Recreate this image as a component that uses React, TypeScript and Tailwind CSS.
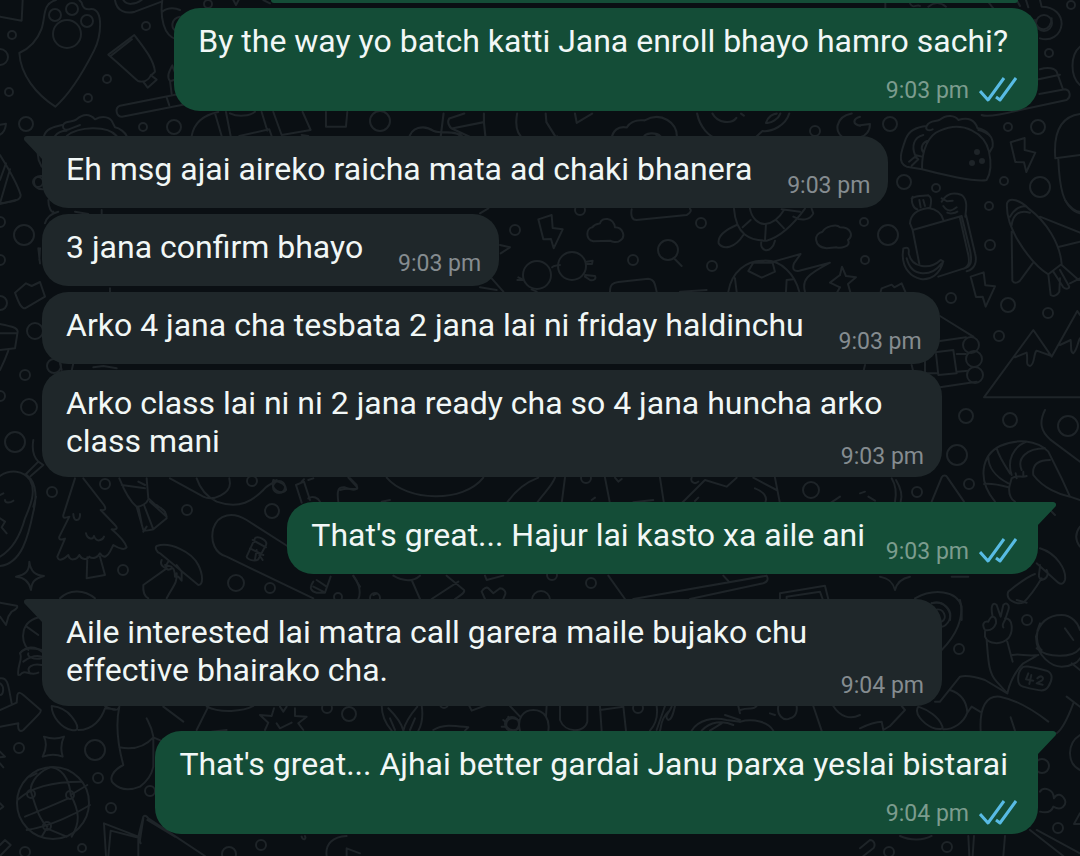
import React from 'react';

interface Message {
  id: number;
  text: string;
  time: string;
  mine?: boolean;
  tail?: boolean;
  // where the time sits relative to the text
  meta: 'inline' | 'corner' | 'below';
}

const messages: Message[] = [
  { id: 1, text: 'By the way yo batch katti Jana enroll bhayo hamro sachi?', time: '9:03 pm', mine: true, meta: 'below' },
  { id: 2, text: 'Eh msg ajai aireko raicha mata ad chaki bhanera', time: '9:03 pm', tail: true, meta: 'inline' },
  { id: 3, text: '3 jana confirm bhayo', time: '9:03 pm', meta: 'inline' },
  { id: 4, text: 'Arko 4 jana cha tesbata 2 jana lai ni friday haldinchu', time: '9:03 pm', meta: 'inline' },
  { id: 5, text: 'Arko class lai ni ni 2 jana ready cha so 4 jana huncha arko class mani', time: '9:03 pm', meta: 'corner' },
  { id: 6, text: "That's great... Hajur lai kasto xa aile ani", time: '9:03 pm', mine: true, tail: true, meta: 'inline' },
  { id: 7, text: 'Aile interested lai matra call garera maile bujako chu effective bhairako cha.', time: '9:04 pm', tail: true, meta: 'corner' },
  { id: 8, text: "That's great... Ajhai better gardai Janu parxa yeslai bistarai", time: '9:04 pm', mine: true, tail: true, meta: 'below' },
];

// cx, cy, r
const bubbles = [
  [12, 35, 4], [0, 57, 8], [9, 92, 4], [26, 124, 7], [107, 79, 4], [88, 98, 4], [146, 26, 4], [143, 127, 4],
  [174, 127, 7], [72, 9, 6], [55, 15, 6], [87, 21, 6], [67, 34, 14], [208, 4, 4], [38, 182, 5],
  [1071, 5, 4], [1044, 23, 8], [1049, 53, 4], [890, 124, 7], [1008, 127, 4], [1038, 127, 7], [904, 182, 7],
  [936, 188, 4], [1004, 181, 4], [1040, 187, 10], [989, 206, 4],
  [515, 230, 5], [701, 223, 5], [633, 260, 5], [712, 266, 5], [580, 210, 5], [668, 250, 10], [537, 275, 14], [572, 266, 14],
  [864, 222, 4], [888, 235, 10], [865, 260, 4], [990, 245, 5], [951, 298, 5], [1008, 305, 7], [1048, 313, 5],
  [999, 336, 5], [971, 345, 8], [974, 359, 8], [975, 375, 8], [966, 416, 7], [1010, 420, 7], [1068, 426, 10],
  [957, 455, 10], [917, 492, 5], [969, 484, 5], [1027, 620, 5], [959, 649, 5], [1042, 766, 7], [1058, 828, 5],
  [947, 847, 5], [889, 852, 5], [24, 235, 10], [0, 222, 5], [0, 260, 5], [0, 303, 7], [35, 331, 8], [25, 375, 5],
  [0, 396, 5], [29, 407, 8], [54, 366, 7], [15, 442, 10], [52, 492, 5], [105, 484, 5], [252, 481, 5], [187, 510, 5],
  [272, 511, 7], [279, 487, 6], [123, 570, 5], [236, 583, 8], [270, 588, 5], [19, 748, 5], [95, 750, 10],
  [98, 778, 5], [150, 791, 5], [111, 808, 5], [82, 848, 4], [25, 852, 5], [261, 845, 5], [229, 854, 7],
  [349, 714, 7], [327, 708, 5], [53, 803, 36], [31, 794, 4], [70, 795, 4], [47, 826, 4], [444, 704, 4],
  [638, 708, 5], [811, 490, 8], [591, 583, 5], [375, 598, 5], [552, 575, 5], [541, 600, 9], [380, 121, 10], [815, 131, 5],
  [586, 478, 5], [512, 724, 7], [338, 597, 4],
];

// Each doodle group is drawn at three times its size around its own origin
const doodles = [
  {
    at: 'translate(0 0) scale(0.3333)',
    paths: [
      'M0 50 65 62 68 0',
      'M168 0C125 12 138 50 124 88 112 120 88 145 58 159 62 225 108 282 166 320 206 285 250 215 282 152 304 108 312 25 273 27 258 30 248 25 245 8L238 0',
      'M403 105 325 164C362 195 398 230 414 243 430 248 445 242 452 227L465 215C462 180 430 140 403 105ZM396 118 332 168M452 225 470 239 443 263 429 244',
      'M548 280 360 317C342 325 350 350 366 350L560 312M500 292 508 316M515 282 510 243C498 228 510 210 517 196 520 212 532 220 526 238L530 278M512 243 530 238',
      'M132 408C138 385 165 380 190 374 195 360 220 368 230 358 250 340 270 342 285 358 310 345 332 352 338 368L345 382M190 374C185 390 200 392 212 386L240 375M345 382C360 384 375 398 380 408M200 408C235 380 320 375 350 408M165 408C172 398 185 392 200 392',
      'M0 374 18 371C16 392 8 400 0 404M0 465C25 505 55 560 62 585 62 598 50 605 0 610M0 610 30 508M0 540 18 490M110 440 116 480 125 500M125 528C92 525 95 570 130 568',
      'M345 0C350 35 380 42 405 35L485 5M370 0C380 16 405 15 425 0M487 0C480 50 490 108 530 118M487 35C505 20 530 25 540 30M540 50C515 55 508 85 532 95M700 0 708 15 716 0M790 0 810 10',
      'M575 408C582 370 610 345 655 336M645 340 665 408M678 336 692 408M690 340C715 352 750 348 765 335M785 336 802 392M718 408 808 388 815 408M820 336 845 405 932 390 908 336M905 405 925 408M978 336V380H1038L1042 336',
    ],
  },
  {
    at: 'translate(860 0) scale(0.3333)',
    paths: [
      'M365 345C380 352 420 345 480 330L620 300C635 290 630 270 615 268L538 282M536 238 600 224M540 208C565 200 585 205 590 215L608 265M498 0 505 22M540 0 545 20C585 20 605 45 605 72 602 108 570 125 540 115M575 55C575 95 530 100 525 60M660 140C630 165 630 230 660 255M76 0V25M150 10C160 30 170 10 180 18M205 20C220 8 240 5 258 20M380 0 400 25M470 0 480 18',
      'M186 508 140 500C110 490 125 450 138 415 150 385 180 380 200 378 208 360 225 365 238 360 260 342 285 346 295 360 325 350 345 360 352 384 380 390 402 410 398 440L388 458M186 508C185 450 205 405 240 392 310 360 375 400 387 455 395 490 392 520 380 540 350 548 230 520 186 508M200 378C195 390 205 394 218 388M165 465C155 440 160 412 190 405M188 455C180 440 190 425 205 422M165 465 186 470M147 485 165 470 175 478 155 497M392 410C385 400 365 392 355 390',
      'M452 427 494 414 494 450 526 458 499 516 492 487 466 486ZM0 376 30 372C30 395 15 408 4 410M660 342C600 350 580 400 586 475L660 465M595 478C598 550 605 625 660 640',
    ],
  },
  {
    at: 'translate(480 200) scale(0.3333)',
    paths: [
      'M175 58 215 45 218 84 248 88 221 145 213 117 190 118ZM340 124C315 118 318 85 337 82 345 70 355 72 360 70 365 50 400 52 405 82 430 82 438 112 420 122 410 130 395 125 390 122ZM216 202C222 195 230 198 240 195M320 185 338 182 336 192 320 192M315 225 345 228C350 238 340 242 330 240L315 230M112 240H130M115 232 128 238M155 268 170 275',
      'M585 178 605 198M455 28C452 45 455 60 470 60L620 45C632 40 635 30 630 26M762 26C768 105 810 122 860 122 905 110 950 60 975 26M810 26C815 55 835 72 855 72 880 70 900 50 912 30M858 72 855 122M812 60 788 82M890 62 912 85M770 75C740 88 712 105 716 130 730 150 765 145 790 105M845 122C835 155 875 165 885 122M905 28 960 35M940 50C965 65 990 60 1000 40L995 26',
      'M390 275C390 252 400 248 415 246L505 236C525 238 525 255 530 275M600 275 680 270M745 275C755 215 800 180 850 182 905 178 945 225 958 275M770 275 765 235M805 213 820 188H878L885 215 845 233ZM920 240 940 238M920 240 918 275M880 185 962 162 942 190C935 210 945 215 958 212L1050 188C980 225 965 240 975 275M1080 262 1050 248 1080 225M1040 145C1000 140 1000 100 1028 95 1035 80 1070 70 1080 82 1115 82 1120 108 1104 120 1115 140 1080 146 1070 142ZM60 135 90 142 62 160M0 40 25 25M35 235 70 275M0 262 50 270',
      'M1080 225 1086 200 1098 228 1128 232 1104 252 1112 280M1080 262 1070 280',
    ],
  },
  {
    at: 'translate(860 200) scale(0.3333)',
    paths: [
      'M150 70C152 40 175 28 205 24 232 28 245 40 250 60M158 90 305 48 330 150C338 190 332 200 310 206L235 230M158 90 150 70M158 90 178 192M300 55 325 165C330 190 325 200 312 206M318 45 345 160C352 185 345 208 320 214M158 -10C150 10 165 28 172 28M210 25C215 5 215 -10 205 -13M155 -5C170 -15 185 -12 205 -14M182 22 178 0M195 18 190 0M245 5C262 -25 285 -22 305 -15 325 0 318 30 316 50M250 18C265 40 280 30 290 22M262 38C270 42 285 40 292 35M245 -5 262 4 278 2',
      'M130 145C145 140 148 145 146 160 155 205 210 210 242 180L250 184C230 265 130 250 128 165ZM140 175C155 235 215 230 245 190',
      'M332 230 371 217 376 256 405 259 377 320 368 290 348 291ZM62 275 65 265 95 254 103 262 125 250 138 280',
      'M441 10C438 50 455 85 470 115 500 165 535 205 565 223L605 192C600 130 560 65 505 25 480 0 448 -10 441 10M455 75C460 40 480 30 510 38M450 50C465 25 485 15 500 20M455 95 457 242C465 255 480 245 485 235L518 190M540 50 660 98M598 140 660 125M565 223 572 285C582 292 592 285 598 275L600 235M580 215 610 262C620 270 628 265 628 260L600 210M605 195 650 235 660 240M630 250 660 235M615 0C630 25 650 35 660 35',
      'M660 592H372L520 390 575 470 652 333 660 345M465 472 500 458C505 480 495 495 510 498 525 495 520 460 530 452L575 468M600 435 632 420C635 445 630 455 640 460 652 450 655 420 660 415M240 348 340 410M240 423 318 412M200 460 280 450 290 520 235 525 228 460M290 462H318M292 515 325 512M195 480 195 520 235 520M240 562 350 545M155 495 160 515M15 495 10 515',
    ],
  },
  {
    at: 'translate(860 400) scale(0.3333)',
    paths: [
      'M555 30C535 70 545 95 570 118L660 185M405 305C350 240 365 165 420 138 470 115 530 120 565 155L605 235 630 290 660 300M630 290C600 285 550 265 520 225 515 190 540 180 570 180M485 210C470 175 500 145 555 145M455 225C440 180 460 140 500 125M445 250C405 230 385 200 385 170M445 262C420 255 395 250 372 252M455 235 448 260M455 235C470 222 485 235 500 228M448 260C445 285 455 300 465 305M450 220C430 190 415 165 410 145M467 220 470 235M490 215V230',
      'M215 305 245 232C250 225 258 225 262 232L312 305M95 235C110 260 108 290 105 305M108 240C120 260 128 285 122 305M0 280 15 275M25 290 45 302',
      'M540 445C590 460 620 510 615 540 610 555 600 552 595 548L530 490M540 495C540 520 530 530 545 540 565 535 565 520 560 510M525 522C500 530 470 555 445 575 435 600 470 615 490 608 510 590 530 560 545 535M60 530C90 535 100 550 105 570 110 550 125 535 150 530M275 530H325M660 380C645 400 645 420 660 440M165 595C220 565 290 570 305 620V660M215 610C250 600 275 630 270 660M570 330 585 345 575 335',
    ],
  },
  {
    at: 'translate(860 600) scale(0.3333)',
    paths: [
      'M380 120C385 180 385 220 410 245L442 280C450 245 465 215 490 190L535 165M442 125 458 185M458 165C480 160 500 170 535 165M375 90C365 75 370 62 385 65 395 40 410 50 408 70 400 90 385 92 375 90M398 50C390 15 400 5 410 15L422 50M422 50 430 15C440 5 450 15 445 30L435 60C430 70 425 75 430 82M435 55C460 55 460 95 445 115 425 135 385 135 375 110V95',
      'M470 0 500 8M528 110C540 60 570 45 605 45 635 45 655 70 660 90M528 110C530 170 575 200 605 200 635 200 655 185 660 175M530 145C560 175 640 175 660 145M540 70C525 100 530 140 545 150M615 85 640 120M485 205C490 195 505 198 560 212 580 220 578 240 565 260 555 275 545 275 490 260 465 255 475 215 485 205ZM635 190 660 210M620 290 660 320M640 310C625 350 610 385 590 400M660 405C620 430 620 490 660 510',
      'M505 220 498 238 520 242M514 225 508 252M532 235C545 222 555 235 545 242L530 250 548 254',
      'M300 0C315 55 285 110 245 150M215 10C250 0 280 30 268 60 262 75 250 80 245 80M225 30C250 20 265 55 245 65M240 305 300 230C320 225 345 230 375 240L442 280M240 305 225 305M270 270C300 280 320 300 322 338C310 370 280 388 250 388M175 320C160 340 190 370 215 382 235 390 255 390 245 375 235 350 205 330 175 320M322 338 335 320 360 335M362 392C358 320 380 285 420 290 470 300 520 330 565 365M452 352 465 392M125 318 135 330 90 378 70 390 65 365C40 365 20 375 0 385',
      'M540 635C560 640 575 635 580 620 605 635 620 615 615 600 605 580 590 580 582 595 580 565 550 560 540 575M660 640 642 672H660M325 708 328 768M342 708 338 768M435 708 430 768M510 690 610 768M530 690 660 760M120 708C150 722 190 722 215 708M0 745 30 720C42 720 48 735 40 745L10 768',
    ],
  },
  {
    at: 'translate(0 200) scale(0.3333)',
    paths: [
      'M0 12 48 0M45 278 78 250 95 258 120 246 135 290 75 325C65 325 58 315 45 278ZM0 372C30 378 52 382 53 395L45 445 0 450M0 400H50M25 452C15 480 5 500 0 510M145 0C145 25 155 38 160 35M135 70C140 50 155 40 175 35M115 145 120 190M120 145 118 180M225 35 265 42M305 30V42M330 265V280M180 490 185 510M220 490 215 512M280 502 310 498 350 505',
    ],
  },
  {
    at: 'translate(0 440) scale(0.3333)',
    paths: [
      'M0 108C30 88 70 90 90 120 110 155 90 200 75 235 60 290 35 330 0 350M80 105C115 130 108 185 100 215 85 290 65 370 0 378M75 105 115 65 130 75 92 108M100 0C95 30 100 50 115 65M108 170 100 200M0 165 10 160M15 180C15 190 30 190 40 182M0 235 15 245 5 262 20 280',
      'M48 410C75 405 88 395 88 365 92 395 105 405 132 408 105 415 95 425 93 450 88 425 75 412 48 410ZM0 488 50 497C55 500 50 508 35 515L25 530 18 555 0 530',
      'M225 115 190 225C188 235 195 235 208 230L178 290C175 300 185 300 195 296L172 350C175 365 190 360 205 345 210 365 230 360 238 345 245 360 262 360 268 350 280 360 295 350 300 340 312 360 325 345 330 335L340 315C360 328 375 330 380 322 375 305 355 285 335 268 350 270 355 265 345 255L302 210C315 212 320 208 312 195L250 115M220 222C220 248 242 245 240 222M258 280C262 298 280 300 282 288 290 310 308 300 312 290M262 352 260 415 315 405 300 350',
      'M358 115C370 145 385 180 410 200L430 270C435 275 450 270 460 268L500 235C500 215 490 205 470 198L445 175 440 115M365 135 435 145M410 200C425 200 440 190 445 178M432 195 460 268M450 185 500 230M415 200 425 250M415 125 435 135M470 195 495 215M430 275 440 260',
      'M470 318C510 305 575 335 595 375 610 405 610 435 595 435L480 340C468 335 465 322 470 318ZM485 360C478 375 490 382 500 385L430 435C428 460 435 470 445 475M530 400C535 425 515 445 500 475M505 365C490 385 505 395 515 385 520 380 525 395 525 410M530 375 545 395V422L535 410M495 375 515 380',
      'M510 115 610 170C640 185 690 160 690 130L688 115M590 115C600 145 620 170 650 185 720 210 760 180 790 150 800 135 820 130 830 120M820 120C810 155 850 165 858 150 860 135 840 125 820 120ZM888 135 912 125 930 180M888 135 905 188M905 125 912 118M925 120 940 115M925 175C940 165 955 175 960 185M1015 185C1010 150 1015 140 1035 142 1055 150 1075 155 1070 135L1050 115',
      'M862 318 740 240C700 215 655 220 640 265 630 305 645 340 680 350L940 475M740 350C742 360 765 365 775 358L798 315C805 300 770 285 765 295ZM758 300 798 322M750 325 790 345M765 358 770 330M778 345 788 360M940 425C925 445 935 455 950 458L975 458 992 410M950 420 980 440M940 440 970 455M1060 408 1080 440',
      'M180 475C205 450 250 445 285 475M125 530C60 540 60 600 85 630M80 560 115 585M60 640C75 620 100 625 125 630M85 640C80 650 100 660 125 655',
    ],
  },
  {
    at: 'translate(0 640) scale(0.3333)',
    paths: [
      'M0 115C25 110 25 140 35 190M0 210 50 188 52 165C55 155 62 158 70 165L122 210C125 215 120 220 70 270 60 278 52 270 55 250L0 260M0 130C15 140 10 165 0 165M55 105C50 80 70 55 60 40 75 20 105 15 125 35M70 65C90 50 110 45 125 50M90 100C75 80 100 70 125 75M60 105C75 85 90 110 115 98',
      'M132 290C155 298 172 298 192 290 182 310 182 330 188 350 170 342 150 342 128 350 138 330 142 310 132 290ZM155 198C155 230 185 265 215 270 240 275 235 255 215 230 200 210 175 200 155 198M235 270C280 270 305 235 315 205L345 208M358 200C345 260 355 320 370 375 340 390 325 415 340 430 365 455 395 450 420 440 440 425 455 405 460 380V290C455 260 445 245 440 235M358 322C400 330 435 320 460 292M460 292 490 305M315 198C325 205 350 215 355 205M490 200 550 245M625 200 590 270M0 335 15 350 0 352M0 370 10 382',
      'M55 478C100 435 180 425 245 425M75 530C110 515 150 500 205 475M80 570C150 560 230 520 270 495M150 382C105 400 85 440 95 462 110 510 120 540 142 560M155 382C200 390 210 440 212 465 240 515 240 550 215 590M90 410 110 400M125 590 140 565 200 590M212 465 262 435',
      'M318 648 312 550 415 590 430 530C435 525 440 528 445 535L615 648M325 648 332 572 410 592M415 590 422 610M415 590 415 648M442 540 525 590M430 535 420 600M0 490 10 500 0 508M0 615 15 600 32 615 0 648M620 200C660 220 730 215 760 198M780 225 815 228 822 205M885 205 885 228 920 230 895 250 910 270M780 225 805 248 795 270M840 200 850 215 860 200M830 250 840 265 875 248M635 275 680 270M980 648C975 610 1000 590 1040 588M1040 648V625L1080 640M905 590C910 605 920 595 915 588',
    ],
  },
  {
    at: 'translate(340 690) scale(0.3333)',
    paths: [
      'M125 45C125 80 140 105 155 122M245 45C250 80 245 105 235 122M145 55C170 80 185 100 190 122M232 50C215 70 195 100 190 122M150 85 165 120M225 85 210 120M280 120C310 100 350 108 385 112L375 122M388 48 395 62 440 45M510 48 540 80M540 122C530 85 550 60 580 60 615 60 630 90 625 122M535 90C510 75 495 95 500 110 510 125 530 122 535 115M490 90 500 98M485 110H495M505 80V90M620 48 618 80M660 48V90C675 130 735 130 742 95V48M780 48 785 122M850 48 858 122M780 60 850 50M950 48C955 80 945 105 930 122M975 48 950 120M1005 48C1000 70 995 90 985 90 970 80 990 65 995 50M985 65C960 90 965 110 960 122M1055 122C1075 90 1120 80 1160 90L1200 95M1085 122C1110 95 1150 90 1180 105M1110 122 1145 100M1155 75 1200 90M1195 48 1200 70',
      'M1200 95C1240 85 1285 95 1300 122M1200 60C1230 50 1240 62 1250 48M1315 48C1310 75 1330 95 1350 85 1370 80 1372 60 1370 48M1290 70 1305 75M1420 48 1445 122M1480 48C1500 80 1530 90 1560 75',
    ],
  },
  {
    at: 'translate(340 465) scale(0.3333)',
    paths: [
      'M0 75C30 65 60 80 50 65L25 38M140 38C200 110 370 115 430 38M500 115C520 85 550 55 595 38M590 115C610 85 635 65 645 38M675 38 665 115M795 38 810 115M825 38 835 50 845 42M960 38 972 115M1025 115 1095 45 1160 65 1190 38M1055 38C1050 50 1065 60 1075 50M1245 70C1270 80 1285 95 1275 115M1240 38 1310 75M1305 38 1320 115M1470 115 1500 95M880 112 940 105M755 105 765 98M1065 108 1075 98M125 110 150 105',
      'M160 332C190 350 220 350 240 332M215 345 240 402M320 332 372 375C375 380 372 385 345 402M275 402 355 350M40 332C55 350 65 380 55 402M435 332 440 345 490 332M425 380C430 370 440 365 445 370L460 385 480 370C490 370 500 380 495 390L490 402M425 380 435 402M805 332 855 402M880 402 1280 332M1050 402 1270 355C1285 350 1285 340 1280 332M1150 332 1165 348M1320 402V385L1455 362 1465 402M1340 402V395L1440 380 1448 402M100 390 110 385',
    ],
  },
  {
    at: 'translate(300 90) scale(0.3571)',
    paths: [
      'M305 138C310 105 345 95 375 115 400 125 430 110 455 130M402 66 393 138M418 80C410 90 420 105 425 108L515 90V66M418 80 460 66M425 108 490 138M515 90 520 138M450 120 440 138M608 66C600 110 615 130 628 138M688 66 690 90 715 130 708 138M720 130 725 138M770 66 775 92 818 66M872 138C875 115 890 100 915 105 930 80 955 85 965 85 1010 60 1060 90 1055 138M960 138C965 115 1000 120 1010 130M985 138 1000 128M1112 66C1120 105 1145 130 1170 138M1155 66C1170 95 1210 95 1222 78M1235 66 1243 72M1305 92C1310 75 1325 66 1335 66M1305 92C1320 95 1340 80 1345 66M1370 66C1360 100 1320 118 1295 115L1270 138M1545 66C1500 75 1490 120 1530 138M1568 75C1550 80 1545 95 1568 100',
    ],
  },
];

const Wallpaper: React.FC = () => (
  <svg
    aria-hidden="true"
    viewBox="0 0 1080 856"
    preserveAspectRatio="xMidYMin slice"
    className="absolute inset-0 h-full w-full"
    fill="none"
    stroke="#1e2428"
    strokeWidth={2}
    strokeLinecap="round"
    strokeLinejoin="round"
  >
    {bubbles.map(([cx, cy, r]) => (
      <circle key={`${cx}-${cy}`} cx={cx} cy={cy} r={r} />
    ))}
    {doodles.map((d) => (
      <g key={d.at} transform={d.at} strokeWidth={6}>
        {d.paths.map((p) => (
          <path key={p} d={p} />
        ))}
      </g>
    ))}
    <g fill="#1e2428" stroke="none">
      <circle cx={977} cy={152} r={3} />
      <circle cx={982} cy={161} r={3} />
      <circle cx={972} cy={163} r={3} />
    </g>
  </svg>
);

const ReadTicks: React.FC = () => (
  <svg
    role="img"
    aria-label="Read"
    viewBox="0 0 38 26"
    className="mb-1 h-[26px] w-[38px]"
    fill="none"
    stroke="#58bbe4"
    strokeWidth={3}
    strokeLinejoin="round"
  >
    <path d="M1 15 9 24 25 2" />
    <path d="M17 21 21 24 37 2" />
  </svg>
);

const Tail: React.FC<{ mine?: boolean }> = ({ mine }) =>
  mine ? (
    <svg aria-hidden="true" viewBox="0 0 19 24" className="absolute top-0 -right-[18px] h-6 w-[19px]">
      <path d="M0 0H16C19 0 20 3 18 5L1 23H0Z" fill="#144d37" />
    </svg>
  ) : (
    <svg aria-hidden="true" viewBox="0 0 19 24" className="absolute top-0 -left-[18px] h-6 w-[19px]">
      <path d="M19 0H3C0 0 -1 3 1 5L18 23H19Z" fill="#1f272a" />
    </svg>
  );

const Bubble: React.FC<{ message: Message }> = ({ message }) => {
  const { text, time, mine, tail, meta } = message;

  const shape = mine
    ? `self-end bg-[#144d37] pr-[21px] ${tail ? 'rounded-tr-none' : ''}`
    : `self-start bg-[#1f272a] pr-[18px] ${tail ? 'rounded-tl-none' : ''}`;

  const room = {
    inline: mine ? 'pb-3 pr-[152px]' : 'pb-3 pr-[118px]',
    corner: 'pb-[11px]',
    below: 'pb-[45px] pr-[9px]',
  }[meta];

  return (
    <li
      className={`relative grid max-w-[900px] rounded-[26px] pt-[14px] pl-6 ${meta === 'inline' ? 'pb-2' : 'pb-[6px]'} ${shape} ${
        tail ? 'mt-[19px]' : ''
      }`}
    >
      {tail && <Tail mine={mine} />}
      <p className={`col-start-1 row-start-1 text-[32px] leading-[38px] text-[#f1f7f6] ${room}`}>{text}</p>
      <div
        className={`col-start-1 row-start-1 flex h-7 items-center gap-[10px] self-end justify-self-end text-[23px] leading-7 ${
          mine ? 'text-[#7c9c8e]' : 'text-[#858c90]'
        }`}
      >
        <time>{time}</time>
        {mine && <ReadTicks />}
      </div>
    </li>
  );
};

const App: React.FC = () => {
  return (
    <main className="relative min-h-screen overflow-hidden bg-[#0a0f13] font-[Roboto,sans-serif]">
      <Wallpaper />
      <div className="relative px-[42px]">
        {/* bottom edge of the message scrolled out above */}
        <div className="mr-5 ml-auto h-[3px] w-3/4 rounded-b-[3px] bg-[#144d37]"></div>
        <ol className="flex flex-col gap-[6px] pt-[5px]">
          {messages.map((m) => (
            <Bubble key={m.id} message={m} />
          ))}
        </ol>
      </div>
    </main>
  );
};

export default App;
